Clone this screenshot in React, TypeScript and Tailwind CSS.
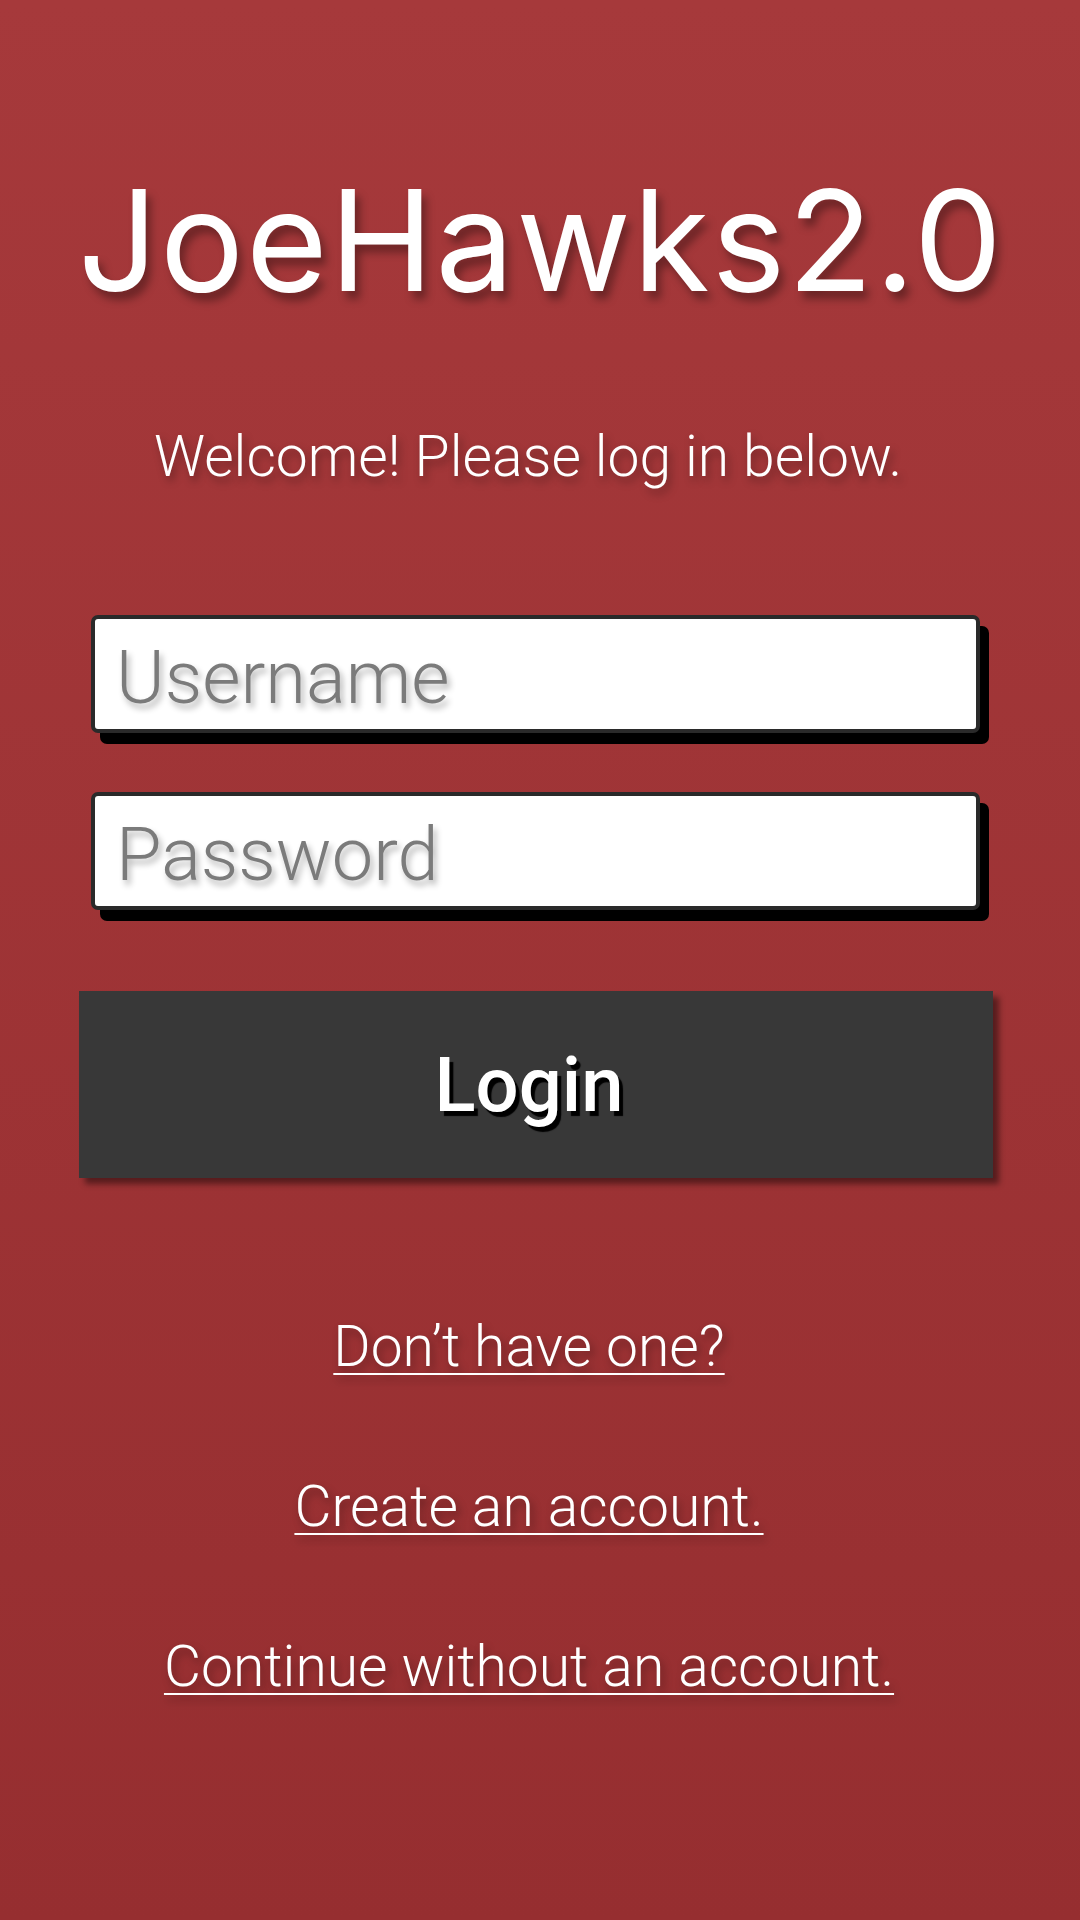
import React from "react";

export default function App() {
  return (
    <div className="h-[1920px] w-full overflow-hidden bg-linear-to-b from-[#a6393b] to-[#962e30] flex flex-col font-[Roboto] text-white">
      <h1 className="mt-[170px] pl-[2px] text-center font-[Inter] text-[140px] leading-none font-normal tracking-[2px] [text-shadow:5px_8px_8px_rgba(0,0,0,0.35)]">
        JoeHawks2.0
      </h1>
      <p className="mt-[118px] pr-[24px] text-center text-[57px] leading-none font-light [text-shadow:3px_5px_8px_rgba(0,0,0,0.35)]">
        Welcome! Please log in below.
      </p>

      <div className="mt-[130px] ml-[91px] w-[889px] h-[118px] rounded-[7px] border-4 border-[#2a2a2a] bg-white shadow-[9px_11px_0_#000] flex">
        <input
          type="text"
          placeholder="Username"
          className="w-full h-full bg-transparent outline-none pl-[21px] pt-[6px] text-[74px] font-light text-[#333] placeholder:text-[#7b7b7b] placeholder:[text-shadow:3px_5px_6px_rgba(0,0,0,0.3)] font-[Roboto]"
        />
      </div>
      <div className="mt-[59px] ml-[91px] w-[889px] h-[118px] rounded-[7px] border-4 border-[#2a2a2a] bg-white shadow-[9px_11px_0_#000] flex">
        <input
          type="password"
          placeholder="Password"
          className="w-full h-full bg-transparent outline-none pl-[21px] pt-[6px] text-[74px] font-light text-[#333] placeholder:text-[#7b7b7b] placeholder:[text-shadow:3px_5px_6px_rgba(0,0,0,0.3)] font-[Roboto]"
        />
      </div>

      <button className="mt-[81px] ml-[79px] w-[914px] h-[187px] bg-[#383838] shadow-[6px_6px_6px_rgba(0,0,0,0.45)] flex items-center justify-center pr-[14px] text-[76px] leading-none font-medium text-white font-[Roboto] [text-shadow:4px_5px_1px_#000]">
        Login
      </button>

      <div className="mt-[140px] pr-[22px] flex flex-col items-center gap-[103px] text-[57px] leading-none font-light">
        <a href="#" className="underline decoration-2 underline-offset-[7px] [text-shadow:3px_5px_8px_rgba(0,0,0,0.35)]">
          Don’t have one?
        </a>
        <a href="#" className="underline decoration-2 underline-offset-[7px] [text-shadow:3px_5px_8px_rgba(0,0,0,0.35)]">
          Create an account.
        </a>
        <a href="#" className="underline decoration-2 underline-offset-[7px] [text-shadow:3px_5px_8px_rgba(0,0,0,0.35)]">
          Continue without an account.
        </a>
      </div>
    </div>
  );
}
